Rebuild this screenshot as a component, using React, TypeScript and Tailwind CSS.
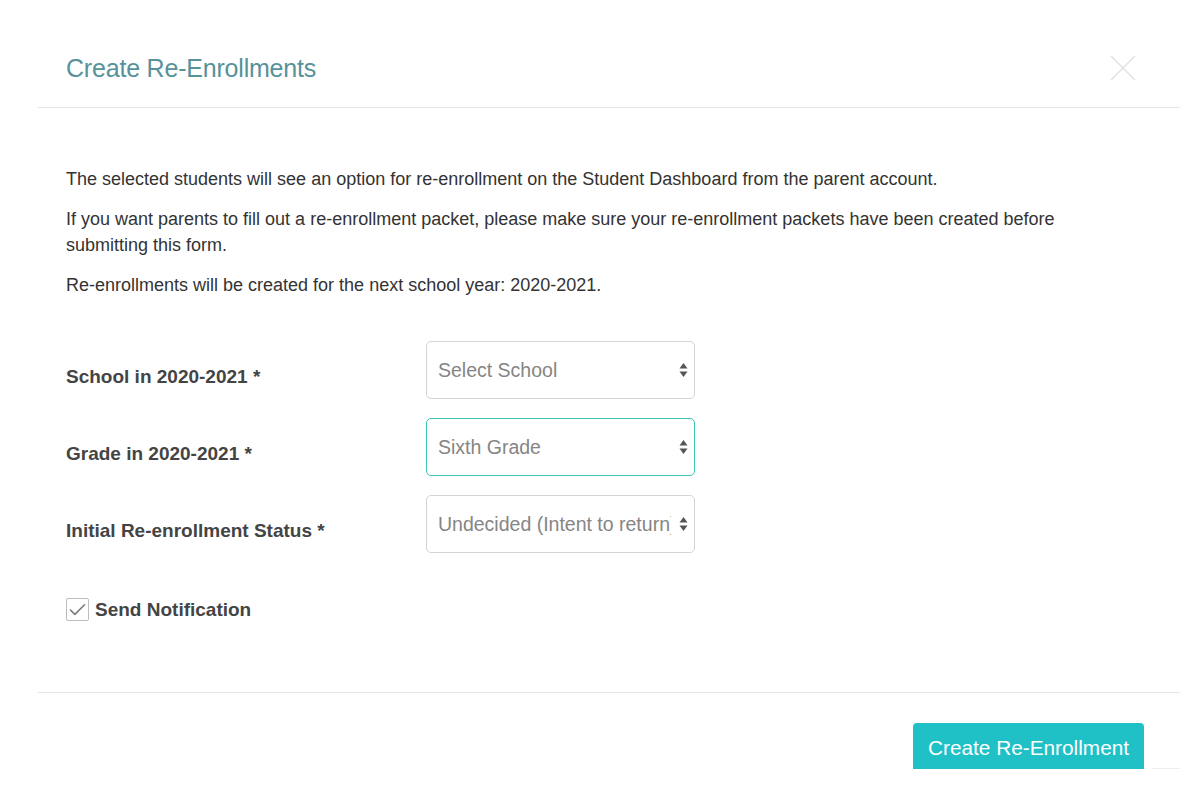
import { Check } from 'lucide-react';

const font = { fontFamily: '"Liberation Sans", Arial, sans-serif' };

function Arrows() {
  return (
    <svg width="9" height="16" viewBox="0 0 9 16" className="shrink-0">
      <path d="M4.5 1 L8.5 6.5 L0.5 6.5 Z" fill="#555" />
      <path d="M4.5 15 L8.5 9.5 L0.5 9.5 Z" fill="#555" />
    </svg>
  );
}

function SelectBox({ value, focused }: { value: string; focused?: boolean }) {
  return (
    <div
      className={`w-[269px] h-[58px] rounded-[5px] border flex items-center pl-[11px] pr-[6px] gap-[8px] overflow-hidden bg-white ${
        focused ? 'border-[#3ec4b5]' : 'border-[#d4d4d4]'
      }`}
    >
      <span className="flex-1 whitespace-nowrap overflow-hidden text-[19.5px] text-[#858585] pt-[1px]">{value}</span>
      <Arrows />
    </div>
  );
}

function FieldRow({ label, value, focused }: { label: string; value: string; focused?: boolean }) {
  return (
    <div className="flex items-center">
      <div className="w-[360px] pt-[15px] text-[19px] font-bold text-[#444]">{label}</div>
      <SelectBox value={value} focused={focused} />
    </div>
  );
}

export default function App() {
  return (
    <div className="w-[1200px] h-[800px] bg-white overflow-hidden" style={font}>
      <div className="ml-[38px] w-[1142px]">
        {/* header */}
        <div className="h-[108px] border-b border-[#e6e6e6] flex items-start justify-between pl-[28px] pr-[44px] pt-[52px]">
          <h1 className="text-[25px] leading-[32px] font-light text-[#56929a] tracking-[-0.2px]">Create Re-Enrollments</h1>
          <svg width="26" height="26" viewBox="0 0 26 26" className="mt-[3px]">
            <path d="M1 1 L25 25 M25 1 L1 25" stroke="#e3e3e3" strokeWidth="1.6" />
          </svg>
        </div>

        {/* body */}
        <div className="pl-[28px] pr-[28px] pt-[58px] h-[585px] border-b border-[#e6e6e6]">
          <div className="text-[18px] leading-[26px] text-[#333] flex flex-col gap-[14px] pr-[56px]">
            <p>The selected students will see an option for re-enrollment on the Student Dashboard from the parent account.</p>
            <p>
              If you want parents to fill out a re-enrollment packet, please make sure your re-enrollment packets have been created before
              submitting this form.
            </p>
            <p>Re-enrollments will be created for the next school year: 2020-2021.</p>
          </div>

          <div className="mt-[43px] flex flex-col gap-[19px]">
            <FieldRow label="School in 2020-2021 *" value="Select School" />
            <FieldRow label="Grade in 2020-2021 *" value="Sixth Grade" focused />
            <FieldRow label="Initial Re-enrollment Status *" value="Undecided (Intent to return)" />
          </div>

          <label className="mt-[42px] flex items-center gap-[6px] w-fit">
            <span className="w-[23px] h-[23px] border border-[#bdbdbd] rounded-[2px] flex items-center justify-center bg-white">
              <Check className="w-[22px] h-[22px] text-[#7a7a7a]" strokeWidth={1.8} />
            </span>
            <span className="text-[19px] font-bold text-[#444] pt-[1px]">Send Notification</span>
          </label>
        </div>

        {/* footer */}
        <div className="h-[76px] overflow-hidden flex items-end justify-end">
          <div className="self-start mt-[30px] mr-[8px]">
            <button className="h-[54px] w-[231px] bg-[#1fc1c7] text-white text-[20.8px] rounded-t-[4px] pb-[5px]">
              Create Re-Enrollment
            </button>
          </div>
          <div className="w-[28px] border-b border-[#eeeeee]" />
        </div>
      </div>
    </div>
  );
}
